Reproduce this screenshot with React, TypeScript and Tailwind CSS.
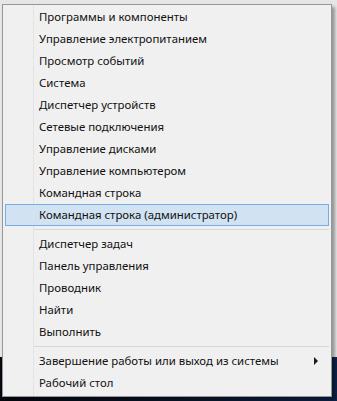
import React from "react";

type Entry = { label: string; active?: boolean; sub?: boolean } | "sep";

const entries: Entry[] = [
  { label: "Программы и компоненты" },
  { label: "Управление электропитанием" },
  { label: "Просмотр событий" },
  { label: "Система" },
  { label: "Диспетчер устройств" },
  { label: "Сетевые подключения" },
  { label: "Управление дисками" },
  { label: "Управление компьютером" },
  { label: "Командная строка" },
  { label: "Командная строка (администратор)", active: true },
  "sep",
  { label: "Диспетчер задач" },
  { label: "Панель управления" },
  { label: "Проводник" },
  { label: "Найти" },
  { label: "Выполнить" },
  "sep",
  { label: "Завершение работы или выход из системы", sub: true },
  { label: "Рабочий стол" },
];

const MenuRow = ({ label, active, sub }: { label: string; active?: boolean; sub?: boolean }) => {
  return (
    <div
      className={`relative flex items-center h-[22px] pl-[33px] pr-[9px] border ${
        active ? "bg-[#d1e2f2] border-[#78aee5]" : "border-transparent"
      }`}
    >
      <span className="flex-1 text-[11.4px] text-[#111] leading-none">{label}</span>
      {sub && (
        <svg width="5" height="8" viewBox="0 0 5 8">
          <path d="M0 0 L4 4 L0 8 Z" fill="#1a1a1a" />
        </svg>
      )}
    </div>
  );
};

const App = () => {
  return (
    <div
      className="relative w-[337px] h-[401px] overflow-hidden"
      style={{ fontFamily: '"Noto Sans", "Segoe UI", sans-serif' }}
    >
      <div className="flex flex-col h-full">
        <div className="h-[357px] bg-[#e6e6e6]" />
        <div className="flex-1 bg-gradient-to-r from-[#05080f] to-[#0c2347]" />
      </div>

      <div className="absolute left-[2px] top-[4px] w-[330px] h-[393px] bg-[#f0f0f0] border border-[#979797] shadow-[3px_3px_3px_rgba(0,0,0,0.35)] px-[2px] py-[1px]">
        <div className="absolute left-[30px] top-0 bottom-0 w-px bg-[#e2e3e3]" />
        <div className="relative flex flex-col">
          {entries.map((e, i) =>
            e === "sep" ? (
              <div key={i} className="h-[7px] flex items-center pl-[29px]">
                <div className="h-px w-full bg-[#d7d7d7]" />
              </div>
            ) : (
              <MenuRow key={i} label={e.label} active={e.active} sub={e.sub} />
            )
          )}
        </div>
      </div>
    </div>
  );
};

export default App;
